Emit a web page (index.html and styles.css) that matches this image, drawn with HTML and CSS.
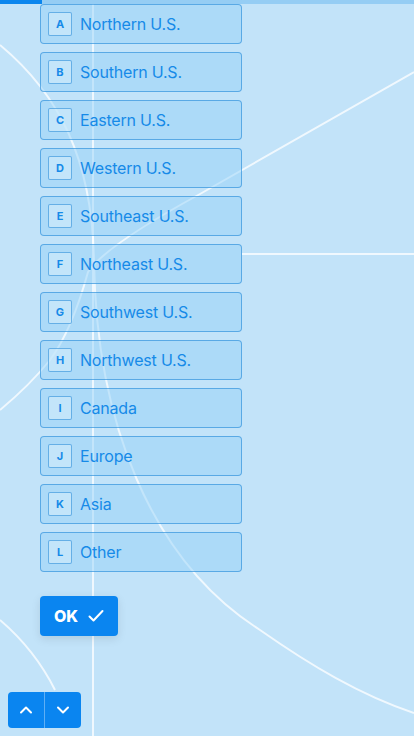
FILE: index.html
```html
<!DOCTYPE html>
<html lang="en">
<head>
    <meta charset="UTF-8">
    <meta name="viewport" content="width=device-width, initial-scale=1.0">
    <title>Region</title>
    <link rel="stylesheet" href="styles.css">
</head>
<body>
    <svg class="backdrop" width="414" height="736" viewBox="0 0 414 736">
        <path d="M93 0 L93 736" />
        <path d="M242 254 L414 254" />
        <path d="M414 72 L200 194 Q105 246 88 272 Q72 330 50 360 Q30 385 0 410" />
        <path d="M0 45 C60 95 92 160 94 260 C96 420 150 560 260 630 C310 665 360 695 414 713" />
        <path d="M0 620 Q35 650 55 690" />
    </svg>

    <div class="progress"><div class="progress-fill"></div></div>

    <main class="question">
        <ul class="choices">
            <li class="choice"><span class="key">A</span>Northern U.S.</li>
            <li class="choice"><span class="key">B</span>Southern U.S.</li>
            <li class="choice"><span class="key">C</span>Eastern U.S.</li>
            <li class="choice"><span class="key">D</span>Western U.S.</li>
            <li class="choice"><span class="key">E</span>Southeast U.S.</li>
            <li class="choice"><span class="key">F</span>Northeast U.S.</li>
            <li class="choice"><span class="key">G</span>Southwest U.S.</li>
            <li class="choice"><span class="key">H</span>Northwest U.S.</li>
            <li class="choice"><span class="key">I</span>Canada</li>
            <li class="choice"><span class="key">J</span>Europe</li>
            <li class="choice"><span class="key">K</span>Asia</li>
            <li class="choice"><span class="key">L</span>Other</li>
        </ul>

        <button class="ok-button" type="button">
            OK
            <svg width="16" height="14" viewBox="0 0 16 14"><path d="M1.5 7.5 L5.5 11.5 L14.5 2" /></svg>
        </button>
    </main>

    <nav class="pager">
        <button type="button" class="pager-btn">
            <svg width="14" height="10" viewBox="0 0 14 10"><path d="M2 7.5 L7 2.5 L12 7.5" /></svg>
        </button>
        <button type="button" class="pager-btn">
            <svg width="14" height="10" viewBox="0 0 14 10"><path d="M2 2.5 L7 7.5 L12 2.5" /></svg>
        </button>
    </nav>
</body>
</html>
```

FILE: styles.css
```css
body {
    font-family: Inter, "Noto Sans", sans-serif;
    margin: 0;
    height: 736px;
    background-color: #c2e3f9;
    color: #168ae8;
    overflow: hidden;
    position: relative;
}
.backdrop {
    position: absolute;
    top: 0;
    left: 0;
    z-index: 0;
}
.backdrop path {
    fill: none;
    stroke: rgba(255, 255, 255, 0.75);
    stroke-width: 2;
}
.progress {
    position: relative;
    height: 4px;
    background-color: #95cdf4;
}
.progress-fill {
    width: 42px;
    height: 100%;
    background-color: #0b86ee;
}
.question {
    position: relative;
    padding: 0 0 0 40px;
}
.choices {
    list-style: none;
    margin: 0;
    padding: 0;
    display: flex;
    flex-direction: column;
    gap: 8px;
}
.choice {
    box-sizing: border-box;
    width: 202px;
    height: 40px;
    display: flex;
    align-items: center;
    gap: 8px;
    padding: 0 7px 1px;
    border: 1px solid rgba(24, 130, 214, 0.55);
    border-radius: 4px;
    background-color: rgba(150, 210, 248, 0.5);
    font-size: 16px;
    letter-spacing: -0.2px;
}
.key {
    box-sizing: border-box;
    width: 24px;
    height: 24px;
    display: flex;
    align-items: center;
    justify-content: center;
    border: 1px solid rgba(24, 130, 214, 0.55);
    border-radius: 2px;
    background-color: rgba(210, 236, 252, 0.6);
    font-size: 11px;
    font-weight: 700;
    letter-spacing: 0;
}
.ok-button {
    margin-top: 24px;
    display: flex;
    align-items: center;
    gap: 10px;
    height: 40px;
    padding: 0 14px;
    border: none;
    border-radius: 4px;
    background-color: #0a85f0;
    color: white;
    font-family: inherit;
    font-size: 16px;
    font-weight: 800;
    box-shadow: 0 3px 10px rgba(0, 0, 0, 0.1);
}
.ok-button svg path,
.pager-btn svg path {
    fill: none;
    stroke: white;
    stroke-width: 2;
    stroke-linecap: round;
    stroke-linejoin: round;
}
.pager {
    position: absolute;
    left: 8px;
    top: 692px;
    display: flex;
    border-radius: 4px;
    overflow: hidden;
}
.pager-btn {
    width: 36px;
    height: 36px;
    display: flex;
    align-items: center;
    justify-content: center;
    padding: 0;
    border: none;
    background-color: #0a85f0;
}
.pager-btn + .pager-btn {
    border-left: 1px solid rgba(255, 255, 255, 0.35);
    width: 37px;
}
```
